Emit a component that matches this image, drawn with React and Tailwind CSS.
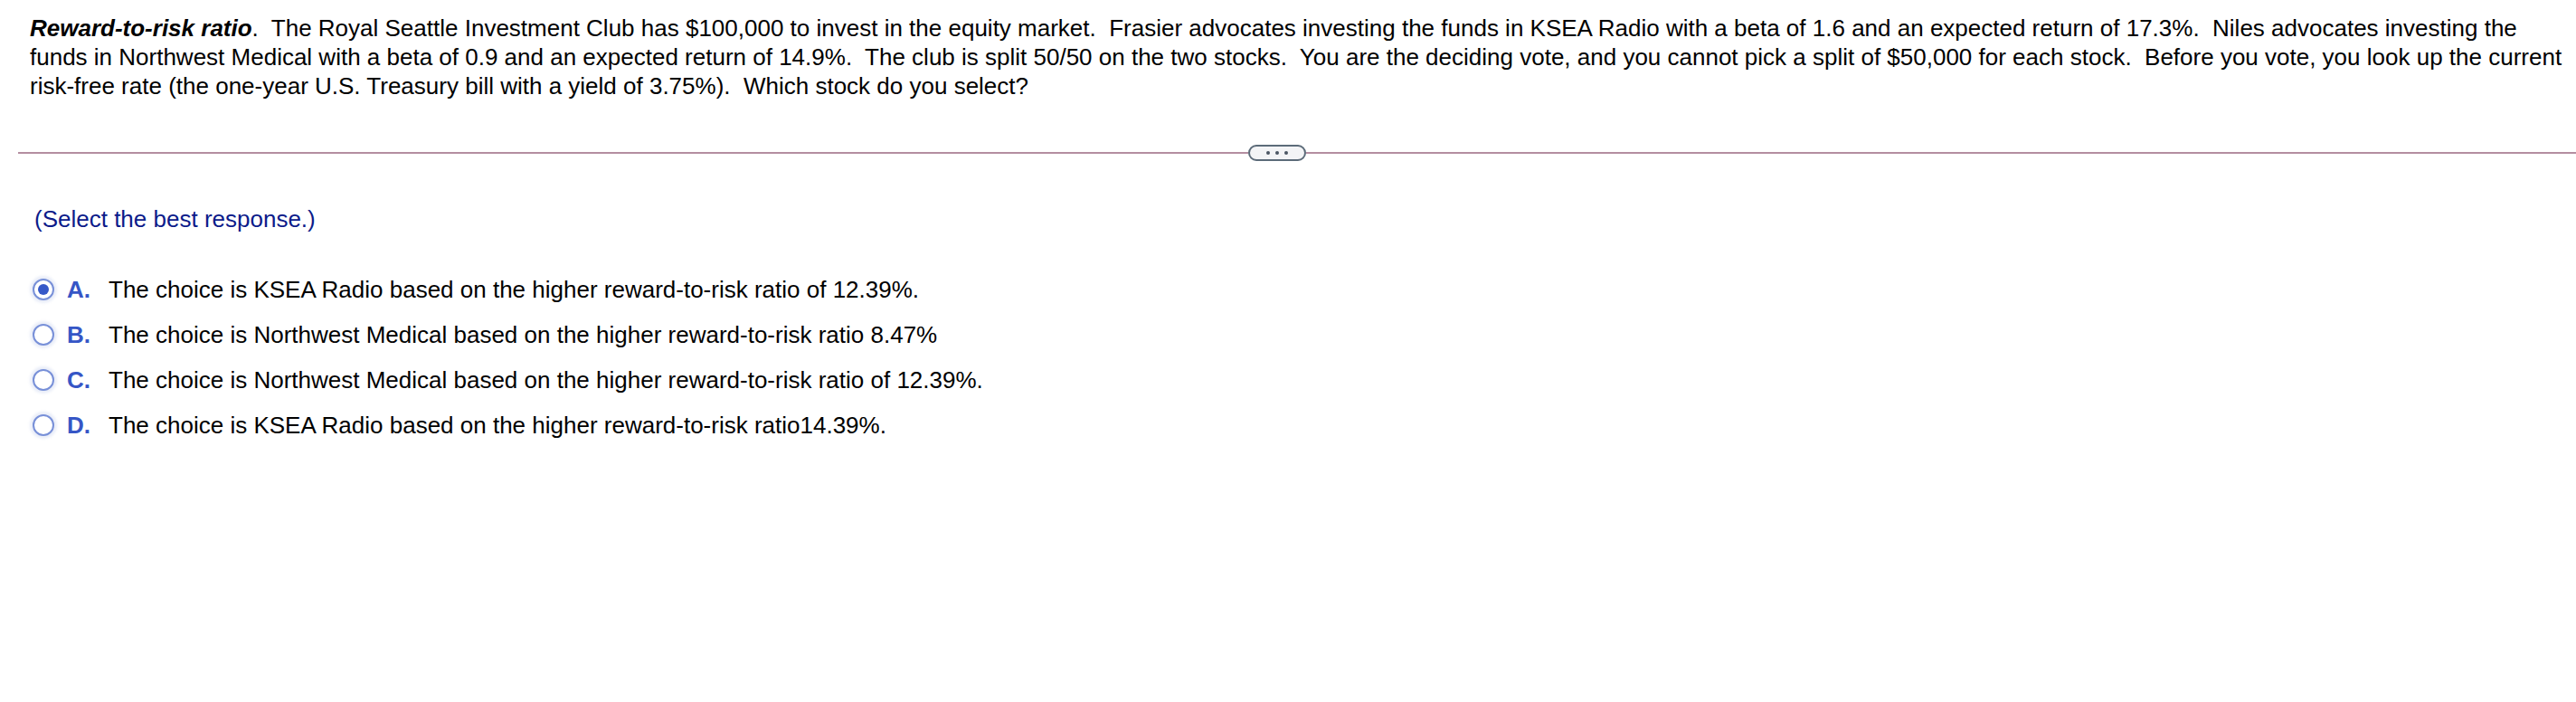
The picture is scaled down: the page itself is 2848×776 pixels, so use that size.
import React from "react";

const options = [
  { letter: "A.", text: "The choice is KSEA Radio based on the higher reward-to-risk ratio of 12.39%.", selected: true },
  { letter: "B.", text: "The choice is Northwest Medical based on the higher reward-to-risk ratio 8.47%" },
  { letter: "C.", text: "The choice is Northwest Medical based on the higher reward-to-risk ratio of 12.39%." },
  { letter: "D.", text: "The choice is KSEA Radio based on the higher reward-to-risk ratio14.39%." },
];

function Radio({ selected }) {
  return (
    <span className="flex h-[24px] w-[24px] shrink-0 items-center justify-center rounded-full border-2 border-[#7890d8] bg-white shadow-[0_0_3px_3px_rgba(109,134,211,0.15)]">
      {selected && <span className="h-[12px] w-[12px] rounded-full bg-[#3558c8]" />}
    </span>
  );
}

export default function App() {
  return (
    <div className="min-h-[776px] w-[2848px] bg-white text-black" style={{ fontFamily: '"Liberation Sans", Arial, sans-serif' }}>
      <div className="pl-[33px] pr-[12px] pt-[15px] text-[26px] leading-[32px]">
        <span className="font-bold italic">Reward-to-risk ratio</span>.&nbsp; The Royal Seattle Investment Club has $100,000 to invest in the equity market.&nbsp; Frasier advocates investing the funds in KSEA Radio with a beta of 1.6 and an expected return of 17.3%.&nbsp; Niles advocates investing the funds in Northwest Medical with a beta of 0.9 and an expected return of 14.9%.&nbsp; The club is split 50/50 on the two stocks.&nbsp; You are the deciding vote, and you cannot pick a split of $50,000 for each stock.&nbsp; Before you vote, you look up the current risk-free rate (the one-year U.S. Treasury bill with a yield of 3.75%).&nbsp; Which stock do you select?
      </div>

      <div className="mt-[49px] ml-[20px] flex items-center">
        <div className="h-[2px] w-[1360px] bg-[#b48ea0]" />
        <div className="flex h-[18px] w-[64px] items-center justify-center gap-[6px] rounded-full border-2 border-[#5c6b79] bg-[#f3f4f6]">
          <span className="h-[4px] w-[4px] rounded-full bg-[#4b5563]" />
          <span className="h-[4px] w-[4px] rounded-full bg-[#4b5563]" />
          <span className="h-[4px] w-[4px] rounded-full bg-[#4b5563]" />
        </div>
        <div className="h-[2px] flex-1 bg-[#b48ea0]" />
      </div>

      <div className="mt-[48px] pl-[38px] text-[26px] leading-[32px] text-[#0c1b8a]">(Select the best response.)</div>

      <div className="mt-[46px] flex flex-col gap-[18px] pl-[36px] text-[26px] leading-[32px]">
        {options.map((o) => (
          <div key={o.letter} className="flex items-center">
            <Radio selected={o.selected} />
            <span className="ml-[14px] w-[46px] font-bold text-[#3656c6]">{o.letter}</span>
            <span>{o.text}</span>
          </div>
        ))}
      </div>
    </div>
  );
}
